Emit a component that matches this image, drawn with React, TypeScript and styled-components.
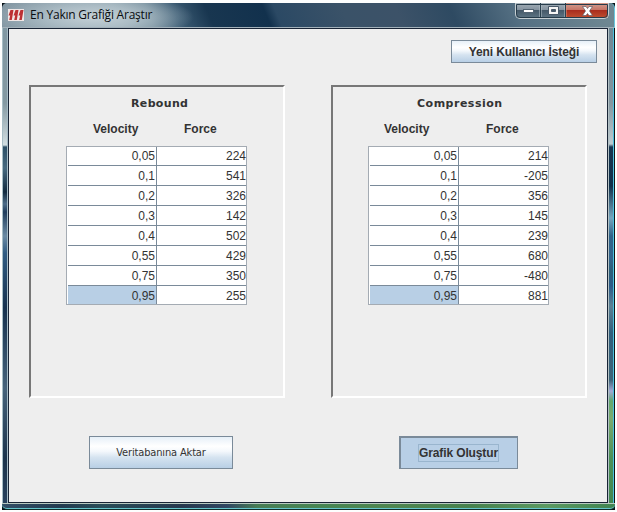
import React from "react";
import styled, { createGlobalStyle, css } from "styled-components";

const GlobalStyle = createGlobalStyle`
  * { box-sizing: border-box; }
  html, body { margin: 0; background: #fdfefe; }
  body {
    width: 617px;
    height: 512px;
    overflow: hidden;
    color: #333;
    font-family: "Liberation Sans", Arial, sans-serif;
    font-size: 12px;
  }
`;

const Desktop = styled.main`
  width: 617px;
  height: 512px;
  padding: 3px 2px 2px;
`;

const WindowFrame = styled.section`
  display: grid;
  grid-template-columns: 6px 600px 7px;
  grid-template-rows: 25px 475px 7px;
  width: 613px;
  height: 507px;
  background: #061116;
`;

const TitleBar = styled.header`
  grid-column: 1 / -1;
  display: flex;
  align-items: flex-start;
  border-radius: 5px 5px 0 0;
  border-right: 1px solid #69c8df;
  border-bottom: 1px solid #a3b1ba;
  background:
    radial-gradient(ellipse 100px 24px at 92px 14px, #c4d0d6 0%, #b4c4cccc 45%, #aebfc800 100%),
    linear-gradient(67deg, #8397a3 0, #8ca0ab 110px, #6d8796 140px, #3c5c74 165px, #183650 195px, #12314d 248px, #2b4964 258px, #3a5268 320px, #3c5268 370px, #2e4a62 420px, #557083 480px, #6e8792 560px);
`;

const AppIcon = styled.svg`
  width: 16px;
  height: 12px;
  margin: 6px 6px 0 6px;
`;

const Title = styled.h1`
  flex: 1;
  margin: 3px 0 0;
  color: #090c10;
  font: 400 12px/18px "Open Sans", sans-serif;
  letter-spacing: -0.22px;
  white-space: nowrap;
`;

const Controls = styled.div`
  display: flex;
  width: 94px;
  height: 16px;
  margin-right: 5px;
  border: 1px solid #c5ced2;
  border-top: 0;
  border-radius: 0 0 5px 5px;
  outline: 1px solid #263b4a;
  outline-offset: -2px;
  overflow: hidden;
`;

const ControlButton = styled.button<{ $close?: boolean }>`
  display: flex;
  align-items: center;
  justify-content: center;
  width: ${({ $close }) => ($close ? 42 : 25)}px;
  height: 15px;
  padding: 0;
  border: 0;
  border-right: ${({ $close }) => ($close ? "0" : "1px solid #29404e")};
  box-shadow: inset 0 0 0 1px ${({ $close }) => ($close ? "#d9917c88" : "#b4c1c988")};
  background: ${({ $close }) => $close
    ? "linear-gradient(#d0a093 0, #c77566 45%, #a92d1e 50%, #c05030 100%)"
    : "linear-gradient(#a2afb8 0, #8493a0 45%, #455969 50%, #5e7685 100%)"};
`;

const LeftEdge = styled.div`
  background: linear-gradient(#8198a3 0, #8499a2 75px, #d2dee1 117px, #2e5067 119px, #486a80 140px, #132b40 164px, #4d6c88 176px, #203d5c 184px, #6c8ba4 208px, #315c83 225px, #17324f 280px, #47637b 360px, #1c344c 430px, #28415d 100%);
  box-shadow: inset 1px 0 #a7bdc5, inset -1px 0 #a5bac5;
`;

const RightEdge = styled.div`
  border-right: 1px solid #111;
  background: linear-gradient(#6f8794 0, #8497a0 75px, #bdcbd0 116px, #173650 119px, #10304a 158px, #76a5bd 190px, #2f6288 208px, #34648c 230px, #2c5f78 243px, #2c5b88 258px, #5c8194 278px, #315f7c 305px, #3d6478 352px, #a3a8d5 363px, #62a86e 373px, #7cab70 390px, #4d9058 430px, #438651 100%);
  box-shadow: inset 1px 0 #b3c1c5, inset -1px 0 #4bc2e0;
`;

const BottomEdge = styled.div`
  grid-column: 1 / -1;
  border-bottom: 1px solid #102e29;
  border-radius: 0 0 5px 5px;
  background: linear-gradient(90deg, #344f68 0, #223b50 60px, #294e59 100px, #26384e 180px, #304763 225px, #477d55 255px, #478653 320px, #4f8650 390px, #47824e 470px, #5b9a62 545px, #408451 100%);
  box-shadow: inset 0 1px #b8c9c0, inset 0 -1px #66c5cc;
`;

const Client = styled.div`
  display: grid;
  grid-template-rows: 56px 313px 104px;
  min-width: 0;
  border: 1px solid #182435;
  background: #eee;
`;

const Toolbar = styled.div`
  display: flex;
  justify-content: flex-end;
  padding: 11px 10px 0 0;
`;

const ActionButton = styled.button<{ $pressed?: boolean; $wide?: boolean; $strong?: boolean }>`
  display: flex;
  align-items: center;
  justify-content: center;
  width: ${({ $wide, $pressed }) => $wide ? 146 : $pressed ? 119 : 144}px;
  height: ${({ $wide }) => ($wide ? 23 : 33)}px;
  padding: 0;
  border: 1px solid #7a8a99;
  color: #333;
  background: ${({ $pressed }) => $pressed ? "#b8cfe6" : "linear-gradient(#e7f0f8 0, #fff 30%, #f4f8fc 46%, #d5e3f0 66%, #b8cfe5 100%)"};
  font: ${({ $strong }) => $strong ? '700 12px "Liberation Sans", sans-serif' : '400 11px "DejaVu Sans Condensed", "DejaVu Sans", sans-serif'};
  ${({ $pressed }) => $pressed && css`
    padding-right: 1px;
    border-width: 2px 1px 1px 2px;
  `}
`;

const FocusLabel = styled.span`
  display: grid;
  place-items: center;
  width: 81px;
  height: 18px;
  border: 1px solid #99b5ce;
`;

const ButtonText = styled.span<{ $spacing: number }>`
  letter-spacing: ${({ $spacing }) => $spacing}px;
  white-space: nowrap;
`;

const Panels = styled.div`
  display: flex;
  gap: 46px;
  padding-left: 20px;
`;

const Panel = styled.section`
  width: 256px;
  height: 313px;
  border: 2px solid;
  border-color: #777 #fff #fff #777;
`;

const PanelTitle = styled.h2<{ $compression?: boolean }>`
  margin: 9px 0 0 ${({ $compression }) => $compression ? 84 : 100}px;
  font: 700 11px/16px "DejaVu Sans", sans-serif;
  letter-spacing: ${({ $compression }) => $compression ? 0.5 : 0.35}px;
  white-space: nowrap;
`;

const ColumnHeads = styled.div<{ $compression?: boolean }>`
  display: grid;
  grid-template-columns: ${({ $compression }) => $compression ? "102px 50px" : "91px 50px"};
  margin: 9px 0 0 ${({ $compression }) => $compression ? 51 : 62}px;
  font-weight: 700;
  line-height: 16px;
`;

const DataTable = styled.div`
  display: grid;
  grid-template-columns: 89px 89px;
  grid-template-rows: 19px repeat(6, 20px) 18px;
  width: 181px;
  height: 159px;
  margin: 9px 0 0 35px;
  padding-left: 1px;
  border: 1px solid #a4abb3;
  background: #fff;
`;

const Cell = styled.div<{ $velocity?: boolean; $selected?: boolean; $last?: boolean; $first?: boolean }>`
  padding-right: ${({ $velocity }) => ($velocity ? 1 : 0)}px;
  border-right: ${({ $velocity }) => $velocity ? "1px solid #7a8a99" : "0"};
  border-bottom: ${({ $last }) => $last ? "0" : "1px solid #7a8a99"};
  background: ${({ $selected }) => $selected ? "#b8cfe5" : "#fff"};
  line-height: ${({ $first }) => ($first ? 19 : 21)}px;
  text-align: right;
`;

const FooterActions = styled.div`
  display: flex;
  align-items: flex-start;
  gap: 166px;
  padding: 38px 0 0 80px;
`;

const velocities = ["0,05", "0,1", "0,2", "0,3", "0,4", "0,55", "0,75", "0,95"];

function DataPanel({ title, forces, compression = false }: {
  title: string;
  forces: string[];
  compression?: boolean;
}) {
  return (
    <Panel>
      <PanelTitle $compression={compression}>{title}</PanelTitle>
      <ColumnHeads $compression={compression}><span>Velocity</span><span>Force</span></ColumnHeads>
      <DataTable>
        {velocities.map((velocity, index) => (
          <React.Fragment key={velocity}>
            <Cell $velocity $first={index === 0} $selected={index === 7} $last={index === 7}>{velocity}</Cell>
            <Cell $first={index === 0} $last={index === 7}>{forces[index]}</Cell>
          </React.Fragment>
        ))}
      </DataTable>
    </Panel>
  );
}

export default function App() {
  return (
    <Desktop>
      <GlobalStyle />
      <WindowFrame>
        <TitleBar>
          <AppIcon viewBox="0 0 16 12" aria-hidden="true">
            <rect width="16" height="12" fill="#f0e6e5" />
            <path d="M2.5 1h3L3.800 11H1.200L2.200 6.500H.5zM7.500 1h3L8.800 11H6.200L7.200 6.500H5.500zM12.500 1h3L13.800 11H11.200L12.200 6.500H10.500z" fill="#bd3034" />
          </AppIcon>
          <Title>En Yakın Grafiği Araştır</Title>
          <Controls>
            <ControlButton aria-label="Simge durumuna küçült">
              <svg width="13" height="7"><rect x="1.5" y="2.5" width="10" height="3" fill="#fff" stroke="#536473" /></svg>
            </ControlButton>
            <ControlButton aria-label="Ekranı kapla">
              <svg width="13" height="11"><path fillRule="evenodd" d="M1.5 1.5h10v8h-10zM4.5 4.5h4v2h-4z" fill="#f5f5f5" stroke="#485969" /></svg>
            </ControlButton>
            <ControlButton $close aria-label="Kapat">
              <svg width="13" height="12"><path d="M1.5 1.5h3.5l1.5 2 1.5-2h3.5L8.5 6l3 4.5H8l-1.5-2-1.5 2H1.500l3-4.5z" fill="#fff" stroke="#625d66" strokeWidth=".7" /></svg>
            </ControlButton>
          </Controls>
        </TitleBar>
        <LeftEdge />
        <Client>
          <Toolbar>
            <ActionButton $wide $strong><ButtonText $spacing={-0.1}>Yeni Kullanıcı İsteği</ButtonText></ActionButton>
          </Toolbar>
          <Panels>
            <DataPanel title="Rebound" forces={["224", "541", "326", "142", "502", "429", "350", "255"]} />
            <DataPanel compression title="Compression" forces={["214", "-205", "356", "145", "239", "680", "-480", "881"]} />
          </Panels>
          <FooterActions>
            <ActionButton><ButtonText $spacing={-0.15}>Veritabanına Aktar</ButtonText></ActionButton>
            <ActionButton $pressed $strong><FocusLabel><ButtonText $spacing={-0.12}>Grafik Oluştur</ButtonText></FocusLabel></ActionButton>
          </FooterActions>
        </Client>
        <RightEdge />
        <BottomEdge />
      </WindowFrame>
    </Desktop>
  );
}
